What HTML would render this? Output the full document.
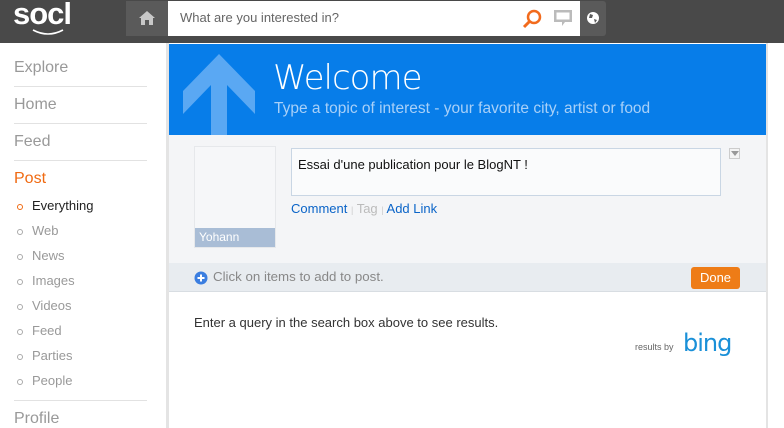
<!DOCTYPE html>
<html><head><style>
*{margin:0;padding:0;box-sizing:border-box}
body{width:784px;height:428px;overflow:hidden;background:#fff;font-family:"Liberation Sans",Arial,sans-serif;position:relative}
.a{position:absolute}
.nav{left:14px;font-size:16px;color:#999}
.hr{left:14px;width:133px;height:1px;background:#e2e2e2}
.sub{left:32px;font-size:13px;color:#999}
.dot{left:17px;width:6px;height:6px;border:1px solid #aaa;border-radius:50%}
</style></head><body>
<div class="a" style="left:0;top:0;width:784px;height:43px;background:#494949"></div>
<div class="a" style="left:13px;top:-4px;font-size:31px;color:#fff;font-weight:bold;letter-spacing:-1px">socl</div>
<svg class="a" style="left:30px;top:28px" width="36" height="10"><path d="M3 2 Q18 10 33 2" stroke="#fff" stroke-width="1.6" fill="none"/></svg>
<div class="a" style="left:126px;top:1px;width:42px;height:35px;background:#5a5a5a"></div>
<svg class="a" style="left:138px;top:10px" width="18" height="16"><path d="M9 1 L1 8 H3 V15 H7 V10 H11 V15 H15 V8 H17 Z" fill="#c8c8c8"/></svg>
<div class="a" style="left:168px;top:1px;width:412px;height:35px;background:#fff"></div>
<div class="a" style="left:180px;top:10px;font-size:13px;color:#666">What are you interested in?</div>
<svg class="a" style="left:521px;top:8px" width="22" height="22"><circle cx="13" cy="9" r="6" stroke="#f26b1d" stroke-width="2.5" fill="none"/><path d="M8.5 13.5 L3 19" stroke="#f26b1d" stroke-width="3"/></svg>
<svg class="a" style="left:553px;top:9px" width="20" height="20"><path d="M1 1 H19 V13 H12 L9 17 V13 H1 Z" fill="#bbb"/><rect x="3.5" y="3.5" width="13" height="7" fill="#fff"/></svg>
<div class="a" style="left:580px;top:1px;width:26px;height:35px;background:#5a5a5a;border-radius:0 3px 3px 0"></div>
<svg class="a" style="left:586px;top:11px" width="14" height="14"><circle cx="7" cy="7" r="6" fill="#fff"/><path d="M4 3 L7 4 L6 7 L3 7 Z M8 8 L11 9 L9 12 Z" fill="#5a5a5a"/></svg>

<div class="a" style="left:166px;top:43px;width:3px;height:385px;background:#e4e4e4"></div>
<div class="a" style="left:766px;top:43px;width:2px;height:385px;background:#e4e4e4"></div>
<div class="a" style="left:169px;top:44px;width:597px;height:91px;background:#077de9"></div>
<svg class="a" style="left:183px;top:54px" width="72" height="81"><path d="M0 37 L36 0 L72 37 V60 L44 31 V81 H28 V31 L0 60 Z" fill="#5aa8f3"/></svg>
<div class="a" style="left:273px;top:58px;font-size:34px;color:#fff;font-family:'DejaVu Sans',sans-serif;font-weight:200;letter-spacing:-1px">Welcome</div>
<div class="a" style="left:274px;top:100px;font-size:15.5px;color:#a8d0f8">Type a topic of interest - your favorite city, artist or food</div>

<div class="a" style="left:169px;top:135px;width:597px;height:128px;background:#f4f5f7"></div>
<div class="a" style="left:194px;top:146px;width:82px;height:102px;border:1px solid #e6e8eb;background:#f6f7f9"></div>
<div class="a" style="left:195px;top:228px;width:80px;height:19px;background:#a9bdd6;color:#fff;font-size:12px;padding:2px 0 0 4px">Yohann</div>
<div class="a" style="left:291px;top:148px;width:430px;height:48px;border:1px solid #c9d6e4;background:#fafbfc;font-size:13px;color:#111;padding:8px 0 0 6px">Essai d'une publication pour le BlogNT !</div>
<div class="a" style="left:729px;top:148px;width:11px;height:11px;border:1px solid #ccc;background:#f4f4f4"></div>
<svg class="a" style="left:731px;top:151px" width="8" height="6"><path d="M0 0 H8 L4 5 Z" fill="#999"/></svg>
<div class="a" style="left:291px;top:201px;font-size:13px;color:#0a64c8">Comment <span style="color:#ccc;font-size:9px">|</span> <span style="color:#bbb">Tag</span> <span style="color:#ccc;font-size:9px">|</span> Add Link</div>

<div class="a" style="left:169px;top:263px;width:597px;height:29px;background:#e8ecf0;border-bottom:1px solid #d8dde2"></div>
<svg class="a" style="left:194px;top:271px" width="14" height="14"><circle cx="7" cy="7" r="6.5" fill="#3b7ee0"/><path d="M7 3.5 V10.5 M3.5 7 H10.5" stroke="#fff" stroke-width="2"/></svg>
<div class="a" style="left:213px;top:269px;font-size:13.3px;color:#888">Click on items to add to post.</div>
<div class="a" style="left:691px;top:267px;width:49px;height:22px;background:#ee7c17;border-radius:3px;color:#fff;font-size:13px;text-align:center;line-height:21px">Done</div>
<div class="a" style="left:194px;top:315px;font-size:13px;color:#333">Enter a query in the search box above to see results.</div>
<div class="a" style="left:635px;top:342px;font-size:9px;color:#666">results by</div>
<div class="a" style="left:683px;top:329px;font-size:24px;color:#1a90d8;font-family:'DejaVu Sans',sans-serif;letter-spacing:-1px">bing</div>

<div class="a nav" style="top:59px">Explore</div>
<div class="a hr" style="top:86px"></div>
<div class="a nav" style="top:96px">Home</div>
<div class="a hr" style="top:123px"></div>
<div class="a nav" style="top:133px">Feed</div>
<div class="a hr" style="top:160px"></div>
<div class="a nav" style="top:170px;color:#f06a12">Post</div>
<div class="a dot" style="top:204px;border-color:#f06a12"></div><div class="a sub" style="top:198px;color:#222">Everything</div>
<div class="a dot" style="top:229px"></div><div class="a sub" style="top:223px">Web</div>
<div class="a dot" style="top:254px"></div><div class="a sub" style="top:248px">News</div>
<div class="a dot" style="top:279px"></div><div class="a sub" style="top:273px">Images</div>
<div class="a dot" style="top:304px"></div><div class="a sub" style="top:298px">Videos</div>
<div class="a dot" style="top:329px"></div><div class="a sub" style="top:323px">Feed</div>
<div class="a dot" style="top:354px"></div><div class="a sub" style="top:348px">Parties</div>
<div class="a dot" style="top:379px"></div><div class="a sub" style="top:373px">People</div>
<div class="a hr" style="top:400px"></div>
<div class="a nav" style="top:410px">Profile</div>
</body></html>
